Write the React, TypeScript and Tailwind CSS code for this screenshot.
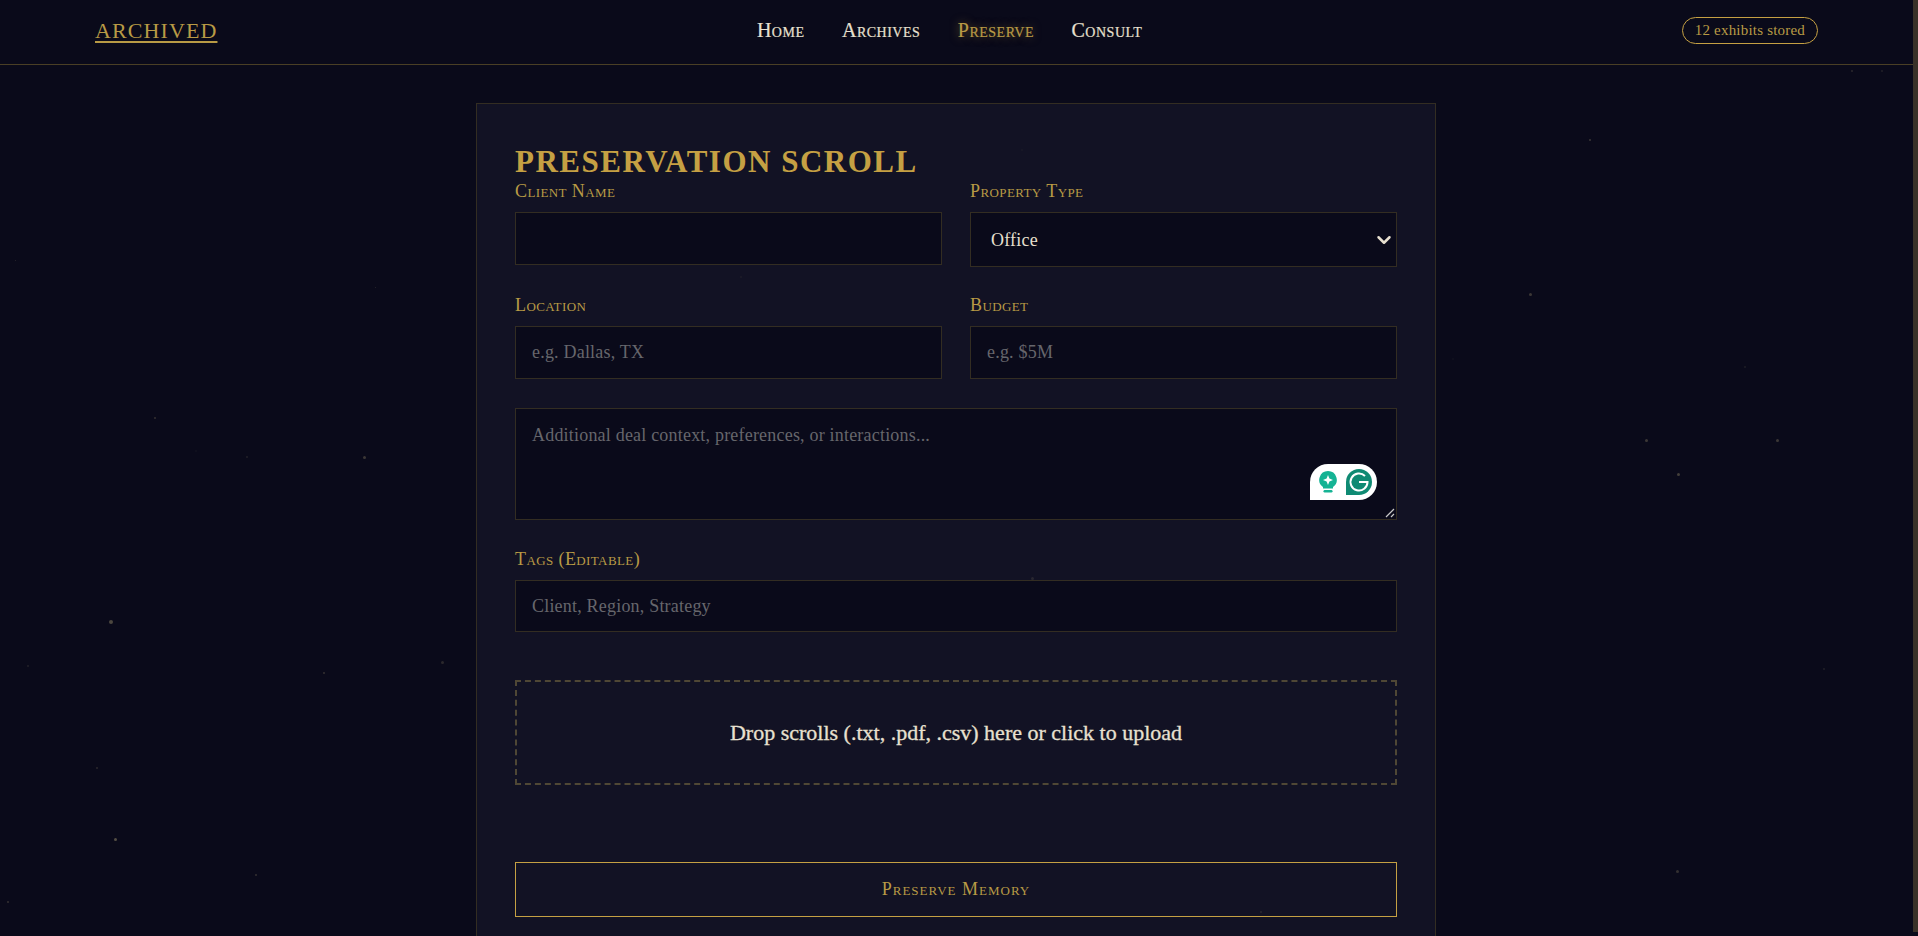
import { ChevronDown } from 'lucide-react';

const display = '[font-family:"Liberation_Serif",serif]';
const labelClass = `${display} [font-variant:small-caps] mb-[10px] text-[18px] leading-[21px] tracking-[0.4px] text-[#b89a45]`;
const boxClass = 'w-full border border-[#332d22] bg-[#0a0a1a] text-[18px] tracking-[0.2px] text-[#e8e0d0] placeholder:text-[#66666c]';

// x, y, size, opacity
const stars = [
  [1589, 139, 2, 0.3], [1851, 70, 2, 0.2], [1881, 70, 2, 0.15], [1529, 293, 3, 0.3], [1744, 366, 2, 0.12],
  [1645, 439, 3, 0.3], [1776, 439, 3, 0.3], [1677, 473, 3, 0.35], [1452, 358, 2, 0.05], [363, 456, 3, 0.3],
  [154, 417, 2, 0.25], [246, 456, 2, 0.15], [195, 450, 2, 0.05], [109, 620, 4, 0.4], [323, 672, 2, 0.25],
  [441, 661, 3, 0.2], [27, 665, 2, 0.15], [96, 767, 2, 0.2], [114, 838, 3, 0.45], [255, 874, 2, 0.25],
  [7, 901, 2, 0.25], [375, 287, 1, 0.2], [1823, 668, 2, 0.15], [1676, 870, 3, 0.25], [1260, 911, 2, 0.15],
  [1031, 577, 3, 0.15], [740, 276, 2, 0.08], [15, 260, 1, 0.2], [1021, 149, 2, 0.05],
];

function Field({ label, placeholder, inputHeight = 'h-[53px]' }: { label: string; placeholder?: string; inputHeight?: string }) {
  return (
    <div className="flex flex-col">
      <label className={labelClass}>{label}</label>
      <input placeholder={placeholder} className={`${boxClass} ${inputHeight} px-[16px]`} />
    </div>
  );
}

function GrammarlyBadge() {
  return (
    <div className="absolute bottom-[20px] right-[20px] flex h-[36px] w-[67px] items-center justify-end gap-[8px] rounded-[18px] rounded-bl-none bg-white pr-[4px]">
      <svg width="18" height="22" viewBox="0 0 18 22">
        <path d="M9 0a8.8 8.8 0 0 0-5 16v1.5h10V16A8.8 8.8 0 0 0 9 0z" fill="#15b394" />
        <rect x="4.5" y="19" width="9" height="2.4" rx="1.2" fill="#15b394" />
        <path d="M9 4l1.4 3.6L14 9l-3.6 1.4L9 14l-1.4-3.6L4 9l3.6-1.4z" fill="#fff" />
      </svg>
      <svg width="28" height="28" viewBox="0 0 28 28">
        <path d="M14 1a13 13 0 1 1 0 26H1V14A13 13 0 0 1 14 1z" fill="#0f8a73" />
        <path d="M20 8a8.5 8.5 0 1 0 2.5 6H14" fill="none" stroke="#fff" strokeWidth="2" />
      </svg>
    </div>
  );
}

export default function App() {
  return (
    <div className="flex h-[936px] overflow-hidden bg-[#0a0a1a] [font-family:'Liberation_Serif',serif]">
      <div className="relative min-w-0 flex-1">
        <header className="flex h-[65px] items-center justify-between border-b border-[#4a3f25] px-[95px] pb-[3px]">
          <a className={`${display} text-[22px] leading-none tracking-[1.1px] text-[#b89a45] underline underline-offset-[3px]`}>ARCHIVED</a>
          <nav className={`${display} flex gap-[37.5px] pb-[2px] text-[20px] tracking-[0.5px] text-[#e8e0d0] [-webkit-text-stroke:0.2px] [font-variant:small-caps]`}>
            <a>Home</a>
            <a>Archives</a>
            <a className="text-[#b89a45] [text-shadow:0_0_10px_rgba(201,161,63,0.5)]">Preserve</a>
            <a>Consult</a>
          </nav>
          <span className="rounded-full border border-[#c5a043] px-[12px] py-[2px] text-[15px] leading-[21px] tracking-[0.2px] text-[#b89a45]">12 exhibits stored</span>
        </header>

        <main className="ml-[476px] mt-[38px] w-[960px] border border-[#332d22] bg-[#121224] px-[38px] pb-[40px] pt-[38px]">
          <h2 className={`${display} text-[31px] font-bold leading-[39px] tracking-[1.5px] text-[#c5a043]`}>PRESERVATION SCROLL</h2>
          <div className="grid grid-cols-2 gap-x-[28px] gap-y-[28px]">
            <Field label="Client Name" />
            <div className="flex flex-col">
              <label className={labelClass}>Property Type</label>
              <div className="relative text-[#e8e0d0]">
                <select className={`${boxClass} block h-[55px] appearance-none pl-[20px] pt-[2px]`}>
                  <option>Office</option>
                </select>
                <ChevronDown size={22} strokeWidth={2.7} className="pointer-events-none absolute right-[2px] top-[17px]" />
              </div>
            </div>
            <Field label="Location" placeholder="e.g. Dallas, TX" />
            <Field label="Budget" placeholder="e.g. $5M" />
          </div>

          <div className="relative mt-[29px]">
            <textarea
              placeholder="Additional deal context, preferences, or interactions..."
              className={`${boxClass} block h-[112px] resize-none px-[16px] py-[13px]`}
            />
            <GrammarlyBadge />
            <svg width="10" height="10" viewBox="0 0 10 10" className="absolute bottom-[2px] right-[2px]">
              <path d="M1 9L9 1M6 9l3-3" stroke="#c8c8c8" strokeWidth="1.2" />
            </svg>
          </div>

          <div className="mt-[29px]">
            <Field label="Tags (Editable)" placeholder="Client, Region, Strategy" inputHeight="h-[52px]" />
          </div>

          <div className="mt-[48px] flex h-[105px] items-center justify-center border-2 border-dashed border-[#4f4735] text-[22px] text-[#e8e0d0] [-webkit-text-stroke:0.3px_#e8e0d0]">
            Drop scrolls (.txt, .pdf, .csv) here or click to upload
          </div>

          <button className={`${display} mt-[77px] block h-[55px] w-full border border-[#c5a043] text-[18px] tracking-[1px] text-[#b89a45] [font-variant:small-caps]`}>
            Preserve Memory
          </button>
        </main>

        {stars.map(([x, y, s, o], i) => (
          <span
            key={i}
            className="pointer-events-none absolute rounded-full bg-[#b0a278]"
            style={{ left: x, top: y, width: s, height: s, opacity: o }}
          />
        ))}
      </div>

      {/* scrollbar */}
      <div className="w-[5px] shrink-0">
        <div className="h-[932px] bg-[#3a3228]" />
      </div>
    </div>
  );
}
